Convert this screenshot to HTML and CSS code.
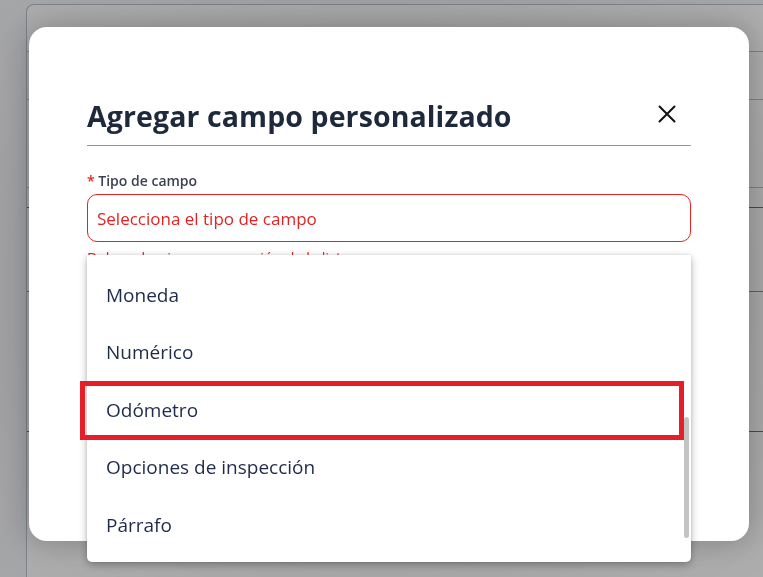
FILE: index.html
```html
<!DOCTYPE html>
<html lang="es">
<head>
<meta charset="utf-8">
<title>Agregar campo personalizado</title>
<link rel="stylesheet" href="styles.css">
</head>
<body>
<div class="page">
  <div class="bg-card">
    <div class="bg-row r1"></div>
    <div class="bg-row r2"></div>
    <div class="bg-row r3"></div>
    <div class="bg-row r4"></div>
    <div class="bg-row r5"></div>
    <div class="bg-row r6"></div>
  </div>
</div>
<div class="overlay">
  <div class="modal">
    <div class="modal-head">
      <h2 class="modal-title">Agregar campo personalizado</h2>
      <button class="close-btn" aria-label="Cerrar">
        <svg width="18" height="18" viewBox="0 0 18 18"><path d="M1.5 1.5 L16.5 16.5 M16.5 1.5 L1.5 16.5" stroke="#111" stroke-width="2" fill="none" stroke-linecap="round"/></svg>
      </button>
    </div>
    <div class="field">
      <label class="field-label"><span class="req">*</span> Tipo de campo</label>
      <div class="select">Selecciona el tipo de campo</div>
      <div class="error">Debe seleccionar una opción de la lista</div>
    </div>
  </div>
  <div class="dropdown">
    <div class="option">Moneda</div>
    <div class="option">Numérico</div>
    <div class="option">Odómetro</div>
    <div class="option">Opciones de inspección</div>
    <div class="option">Párrafo</div>
    <div class="scroll-thumb"></div>
  </div>
  <div class="highlight"></div>
</div>
</body>
</html>
```
FILE: styles.css
```css
* { box-sizing: border-box; }
html, body { margin: 0; padding: 0; }
body {
  width: 763px;
  height: 577px;
  overflow: hidden;
  background: #f4f5f7;
  font-family: "Open Sans", "Noto Sans", sans-serif;
}
.page {
  padding: 4px 0 0 26px;
}
.bg-card {
  height: 600px;
  border: 1px solid #b8c2d2;
  border-right: none;
  border-radius: 8px 0 0 0;
  background: #ffffff;
  display: flex;
  flex-direction: column;
}
.bg-row { border-bottom: 1px solid #b8c2d2; }
.r1 { height: 47px; }
.r2 { height: 48px; }
.r3 { height: 88px; }
.r4 { height: 20px; border-bottom-color: #6b7280; }
.r5 { height: 84px; border-bottom-color: #8a94a6; }
.r6 { height: 140px; border-bottom-color: #6b7280; }

.overlay {
  position: fixed;
  inset: 0;
  background: radial-gradient(ellipse at 50% 50%, rgba(0,0,0,0.42) 0%, rgba(0,0,0,0.36) 60%, rgba(0,0,0,0.32) 100%);
  padding: 27px 0 0 29px;
}
.modal {
  width: 720px;
  height: 514px;
  background: #ffffff;
  border-radius: 18px;
  box-shadow: 0 0 30px rgba(0,0,0,0.25);
  padding: 70px 58px 0 58px;
}
.modal-head {
  display: flex;
  align-items: center;
  justify-content: space-between;
  padding-bottom: 10px;
  border-bottom: 1px solid #8797b4;
}
.modal-title {
  margin: 0;
  font-size: 28.5px;
  line-height: 38px;
  font-weight: 700;
  color: #1e293b;
  letter-spacing: 0.1px;
}
.close-btn {
  border: none;
  background: none;
  padding: 0;
  margin: 0 15px 4px 0;
  width: 18px;
  height: 18px;
  display: flex;
}
.field {
  padding-top: 26px;
}
.field-label {
  display: block;
  font-size: 14px;
  line-height: 18px;
  font-weight: 600;
  color: #3b4252;
  margin-bottom: 4px;
}
.req { color: #e02424; }
.select {
  height: 48px;
  border: 1.5px solid #e02424;
  border-radius: 10px;
  padding: 0 9px;
  display: flex;
  align-items: center;
  font-size: 17px;
  color: #e02424;
}
.error {
  margin-top: 6px;
  font-size: 14.5px;
  line-height: 20px;
  color: #e02424;
}
.dropdown {
  position: absolute;
  left: 87px;
  top: 255px;
  width: 604px;
  height: 307px;
  background: #ffffff;
  border-radius: 0 0 5px 5px;
  box-shadow: 0 3px 8px rgba(0,0,0,0.28), 0 0 3px rgba(0,0,0,0.12);
  padding-top: 11px;
}
.option {
  height: 57.5px;
  display: flex;
  align-items: center;
  padding-left: 19px;
  font-size: 19px;
  color: #1f2b4a;
}
.scroll-thumb {
  position: absolute;
  left: 597px;
  top: 162px;
  width: 5px;
  height: 121px;
  border-radius: 3px;
  background: #c4c4c4;
}
.highlight {
  position: absolute;
  left: 80px;
  top: 381px;
  width: 604px;
  height: 59px;
  border: 5px solid #e51f28;
}
```
